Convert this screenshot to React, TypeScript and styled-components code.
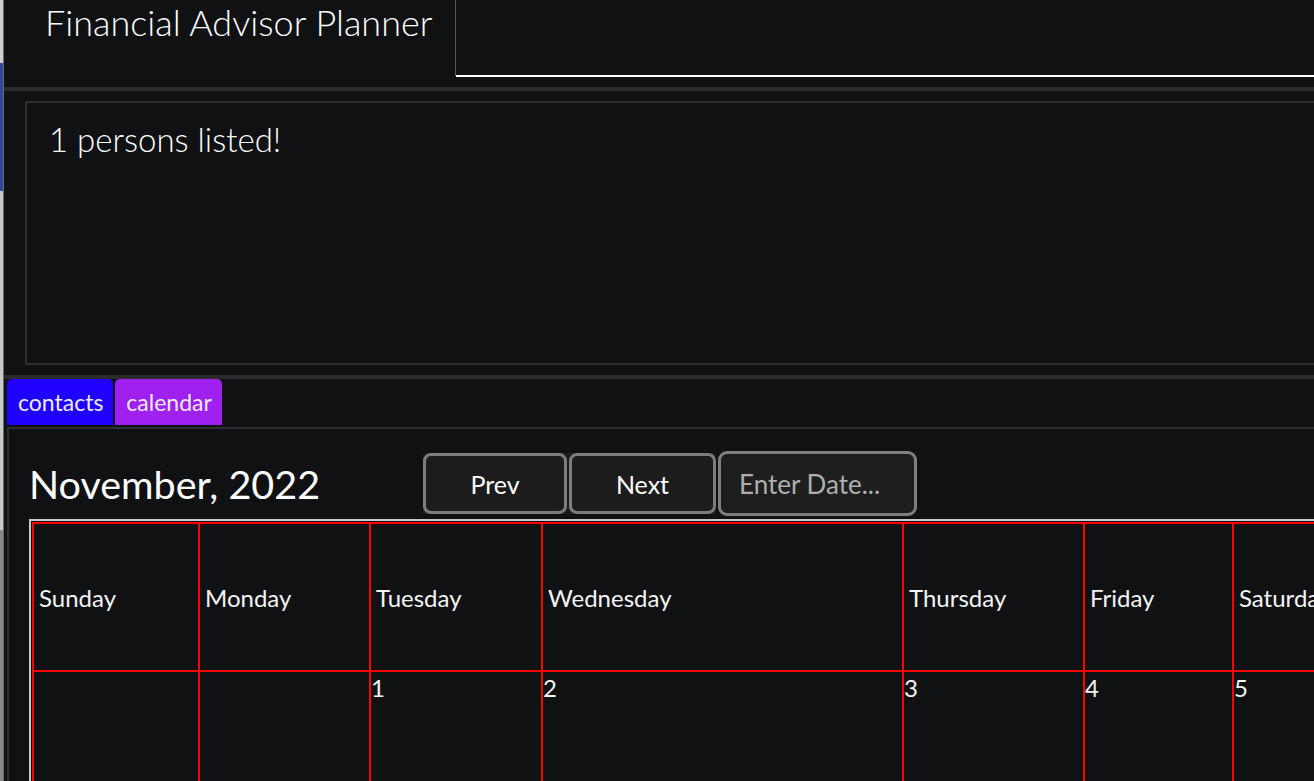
import React from "react";
import styled, { createGlobalStyle } from "styled-components";

const Global = createGlobalStyle`
  html, body {
    margin: 0;
    padding: 0;
    background: #101113;
    overflow: hidden;
  }
  body {
    font-family: Lato, "Open Sans", sans-serif;
    color: #ffffff;
  }
  * { box-sizing: border-box; }
`;

const Screen = styled.div`
  display: flex;
  align-items: flex-start;
  width: 1314px;
  height: 781px;
  overflow: hidden;
  background: #101113;
`;

const LeftEdge = styled.div`
  flex: 0 0 4px;
  align-self: stretch;
  background: linear-gradient(
    to bottom,
    #cfcfcf 0,
    #cfcfcf 63px,
    #34459c 63px,
    #34459c 191px,
    #c9c9c9 191px,
    #c9c9c9 530px,
    #8a8a8a 530px
  );
  border-right: 1px solid #6a6a6a;
`;

const Main = styled.div`
  flex: 0 0 1520px;
  display: flex;
  flex-direction: column;
  & > * {
    flex-shrink: 0;
  }
`;

const Header = styled.header`
  display: flex;
  align-items: flex-start;
  height: 87px;
`;

const TitleTab = styled.div`
  flex: 0 0 452px;
  height: 76px;
  padding-left: 41px;
  border-right: 1px solid #555555;
  font-size: 36px;
  font-weight: 300;
  line-height: 44px;
  color: #ffffff;
`;

const HeaderRest = styled.div`
  flex: 1;
  height: 77px;
  border-bottom: 2px solid #ffffff;
`;

const Divider = styled.div`
  height: 4px;
  background: #2b2b2b;
`;

const ResultBox = styled.section`
  margin: 10px 0 10px 21px;
  height: 264px;
  border: 2px solid #2e2e2e;
  padding: 16px 0 0 22px;
  font-size: 33px;
  font-weight: 300;
  line-height: 40px;
`;

const TabRow = styled.nav`
  display: flex;
  gap: 2px;
  padding-left: 3px;
  height: 46px;
  margin-bottom: 2px;
`;

const Tab = styled.div<{ $color: string }>`
  background: ${(p) => p.$color};
  border-radius: 5px 5px 0 0;
  padding: 0 10px 0 11px;
  font-size: 23px;
  font-weight: 400;
  line-height: 46px;
  color: #ececff;
`;

const TabPanel = styled.div`
  margin-left: 3px;
  border-top: 2px solid #2e2e2e;
  border-left: 2px solid #2e2e2e;
`;

const Toolbar = styled.div`
  display: flex;
  align-items: center;
  padding: 22px 0 3px 20px;
`;

const MonthTitle = styled.h1`
  flex: 0 0 394px;
  margin: 0;
  font-size: 39.5px;
  font-weight: 400;
  line-height: 48px;
`;

const ButtonGroup = styled.div`
  display: flex;
  gap: 2px;
  background: #1c1c1c;
`;

const NavButton = styled.button<{ $w: number }>`
  width: ${(p) => p.$w}px;
  height: 61px;
  background: transparent;
  border: 3px solid #7d7d7d;
  border-radius: 8px;
  color: #ffffff;
  font-family: Lato, sans-serif;
  font-size: 25px;
  padding: 0;
`;

const DateField = styled.input`
  margin-left: 2px;
  width: 199px;
  height: 65px;
  background: #1e1e1e;
  border: 3px solid #7f7f7f;
  border-radius: 9px;
  color: #ffffff;
  font-family: Lato, sans-serif;
  font-size: 26px;
  padding: 0 0 0 18px;
  outline: none;
  &::placeholder {
    color: #aeaeae;
  }
`;

const CalendarFrame = styled.div`
  margin-left: 20px;
  border-top: 2px solid #c8c8c8;
  border-left: 2px solid #c8c8c8;
  padding: 1px 0 0 1px;
`;

const Grid = styled.div`
  display: grid;
  grid-template-columns: 164px 169px 170px 359px 179px 147px 200px;
  grid-auto-rows: 146px;
  gap: 2px;
  padding: 2px;
  background: #ff0000;
  width: max-content;
`;

const DayHead = styled.div`
  background: #101113;
  display: flex;
  align-items: center;
  padding-left: 5px;
  font-size: 24px;
  line-height: 29px;
  color: #f4f4f4;
`;

const DateCell = styled.div`
  background: #101113;
  padding-top: 1px;
  font-size: 24px;
  line-height: 29px;
  color: #f4f4f4;
`;

const days = ["Sunday", "Monday", "Tuesday", "Wednesday", "Thursday", "Friday", "Saturday"];
const firstWeek: (number | null)[] = [null, null, 1, 2, 3, 4, 5];

export default function App() {
  return (
    <>
      <Global />
      <Screen>
        <LeftEdge />
        <Main>
          <Header>
            <TitleTab>Financial Advisor Planner</TitleTab>
            <HeaderRest />
          </Header>
          <Divider />
          <ResultBox>1 persons listed!</ResultBox>
          <Divider />
          <TabRow>
            <Tab $color="#2000ff">contacts</Tab>
            <Tab $color="#a020f0">calendar</Tab>
          </TabRow>
          <TabPanel>
            <Toolbar>
              <MonthTitle>November, 2022</MonthTitle>
              <ButtonGroup>
                <NavButton $w={144}>Prev</NavButton>
                <NavButton $w={147}>Next</NavButton>
              </ButtonGroup>
              <DateField placeholder="Enter Date..." />
            </Toolbar>
            <CalendarFrame>
              <Grid>
                {days.map((d) => (
                  <DayHead key={d}>{d}</DayHead>
                ))}
                {firstWeek.map((c, i) => (
                  <DateCell key={i}>{c ?? ""}</DateCell>
                ))}
              </Grid>
            </CalendarFrame>
          </TabPanel>
        </Main>
      </Screen>
    </>
  );
}
